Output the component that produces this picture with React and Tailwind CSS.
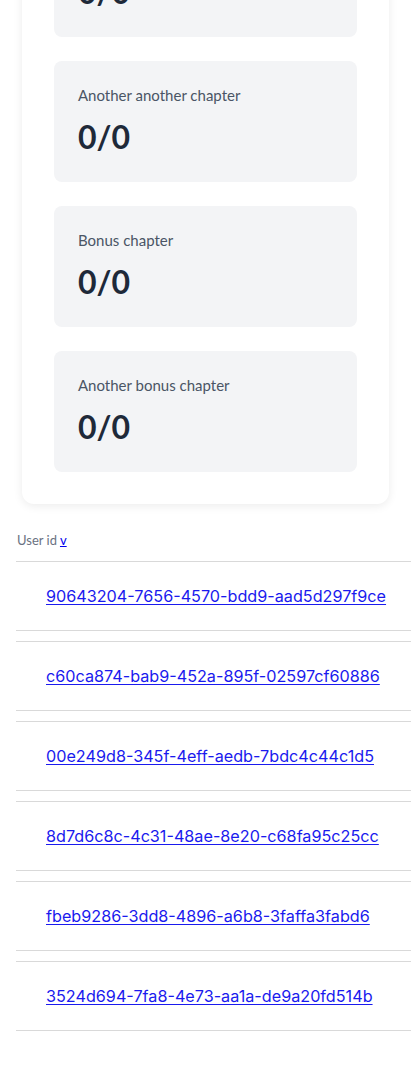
import React from 'react';

const chapters = [
    { title: 'Another chapter', score: '0/0' },
    { title: 'Another another chapter', score: '0/0' },
    { title: 'Bonus chapter', score: '0/0' },
    { title: 'Another bonus chapter', score: '0/0' },
];

const userIds = [
    '90643204-7656-4570-bdd9-aad5d297f9ce',
    'c60ca874-bab9-452a-895f-02597cf60886',
    '00e249d8-345f-4eff-aedb-7bdc4c44c1d5',
    '8d7d6c8c-4c31-48ae-8e20-c68fa95c25cc',
    'fbeb9286-3dd8-4896-a6b8-3faffa3fabd6',
    '3524d694-7fa8-4e73-aa1a-de9a20fd514b',
];

const App = () => {
    return (
        <div className="min-h-[1080px] bg-white overflow-hidden" style={{ fontFamily: 'Lato, "Open Sans", sans-serif' }}>
            <div className="pl-4">
                {/* chapter scores card, scrolled partly off the top */}
                <div className="mt-[-116px] ml-1.5 w-[367px] bg-white rounded-xl shadow-[0_2px_10px_rgba(0,0,0,0.08)] px-8 pt-8 pb-8">
                    <div className="flex flex-col gap-6">
                        {chapters.map((ch) => (
                            <div key={ch.title} className="bg-gray-100 rounded-lg px-6 pt-6 h-[121px]">
                                <p className="text-[15px] leading-5 font-normal text-gray-600">{ch.title}</p>
                                <p className="mt-3 text-[32px] leading-10 font-bold text-gray-800">{ch.score}</p>
                            </div>
                        ))}
                    </div>
                </div>

                <div className="mt-7 pl-px text-[13px] leading-4 text-gray-500">
                    User id <a href="#" className="text-[#0000ee] underline">v</a>
                </div>

                <div className="mt-[13px] flex flex-col gap-2.5" style={{ fontFamily: 'Inter, sans-serif' }}>
                    {userIds.map((id) => (
                        <div key={id} className="h-[70px] border-y border-[#d9d9d9] flex items-center pl-[30px]">
                            <a href="#" className="text-[16.2px] text-[#1a1aee] underline underline-offset-2">{id}</a>
                        </div>
                    ))}
                </div>
            </div>
        </div>
    );
};

export default App;
